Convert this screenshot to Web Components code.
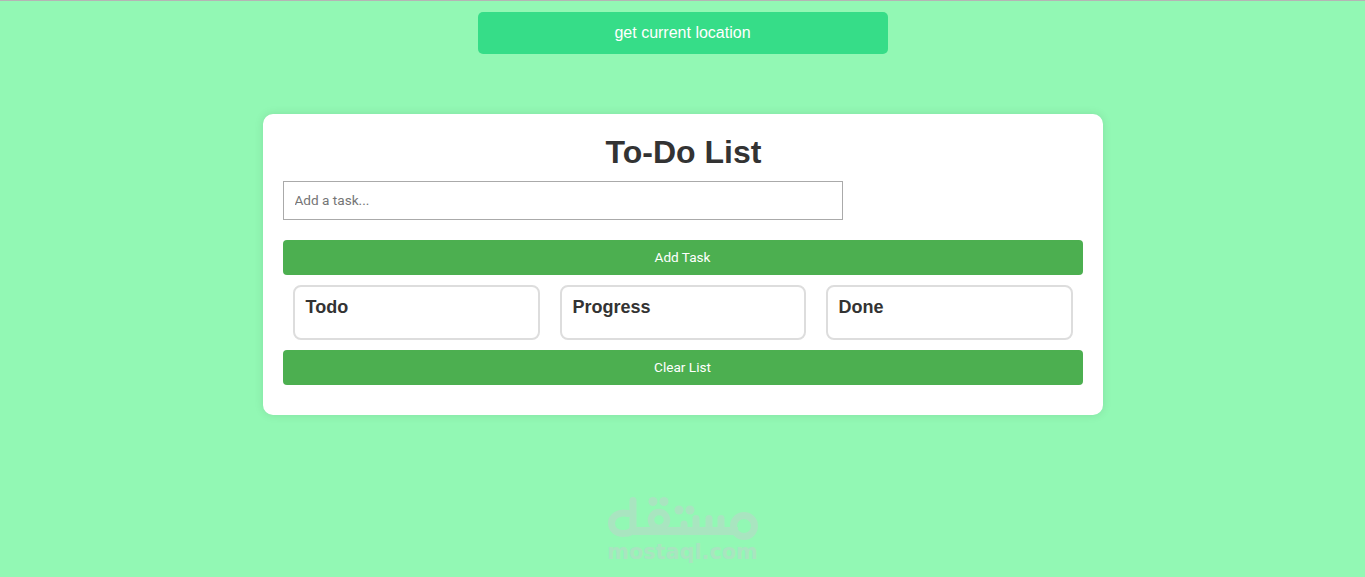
<!DOCTYPE html>
<html>
<head>
<meta charset="utf-8">
<title>To-Do List</title>
<style>
  html, body { margin: 0; height: 100%; }
  body {
    background: #92f8b4;
    border-top: 1px solid #b5b5b5;
    box-sizing: border-box;
    overflow: hidden;
    font-family: "Liberation Sans", Arial, sans-serif;
  }
</style>
</head>
<body>
<todo-app>
  <location-button slot="top">get current location</location-button>
  <task-column>Todo</task-column>
  <task-column>Progress</task-column>
  <task-column>Done</task-column>
</todo-app>
<mostaql-mark></mostaql-mark>

<script>
class LocationButton extends HTMLElement {
  constructor() {
    super();
    this.attachShadow({ mode: "open" });
    this.shadowRoot.innerHTML = `
      <style>
        :host { display: flex; justify-content: center; padding-top: 11px; }
        button {
          width: 410px; height: 42px; border: 0; border-radius: 5px;
          background: #36dd88; color: #fff;
          font: 16px "Liberation Sans", Arial, sans-serif;
        }
      </style>
      <button><slot></slot></button>
    `;
  }
}

class TaskColumn extends HTMLElement {
  constructor() {
    super();
    this.attachShadow({ mode: "open" });
    this.shadowRoot.innerHTML = `
      <style>
        :host {
          display: block; box-sizing: border-box; height: 55px;
          border: 2px solid #ddd; border-radius: 8px;
          padding: 10px 11px;
          font: bold 18px/21px "Liberation Sans", Arial, sans-serif;
          color: #333;
        }
      </style>
      <slot></slot>
    `;
  }
}

class TodoApp extends HTMLElement {
  constructor() {
    super();
    this.attachShadow({ mode: "open" });
    this.shadowRoot.innerHTML = `
      <style>
        :host { display: block; }
        .card {
          box-sizing: border-box; width: 840px; height: 301px; margin: 60px auto 0;
          padding: 20px; background: #fff; border-radius: 10px;
          box-shadow: 0 0 10px rgba(0,0,0,.1);
        }
        h1 {
          margin: 0 0 10px; padding-left: 2px; text-align: center; color: #333;
          font: bold 32px/37px "Liberation Sans", Arial, sans-serif;
        }
        input {
          display: block; box-sizing: border-box; width: 560px; height: 39px;
          margin: 0 0 20px; padding: 0 11px 2px; border: 1px solid #aaa;
          font: 13.6px Roboto, sans-serif; outline: 0;
        }
        input::placeholder { color: #757575; }
        .go {
          display: block; width: 100%; height: 35px; border: 0; border-radius: 4px;
          padding: 0 0 2px; background: #4caf50; color: #fff;
          font: 13.6px Roboto, sans-serif;
        }
        .cols { display: grid; grid-template-columns: 247fr 246fr 247fr; gap: 20px; margin: 10px; }
      </style>
      <slot name="top"></slot>
      <div class="card">
        <h1>To-Do List</h1>
        <input placeholder="Add a task...">
        <button class="go">Add Task</button>
        <div class="cols"><slot></slot></div>
        <button class="go">Clear List</button>
      </div>
    `;
  }
}

class MostaqlMark extends HTMLElement {
  constructor() {
    super();
    this.attachShadow({ mode: "open" });
    this.shadowRoot.innerHTML = `
      <style>
        :host {
          display: flex; flex-direction: column; align-items: center;
          margin-top: 82px; color: #a9e5c0;
        }
        svg { display: block; width: 150px; height: 44px; }
        span { font: bold 20.8px/22px "DejaVu Sans", sans-serif; }
      </style>
      <svg viewBox="0 0 150 44" fill="none" stroke="currentColor" stroke-width="7" stroke-linecap="round" stroke-linejoin="round">
        <path d="M20 16.5C10 14 3.5 20 3.5 26C3.5 33 9 36.5 15 36.5C21 36.5 25 35 25 30V3.5"/>
        <path d="M25 34H130" stroke-width="8" stroke-linecap="butt"/>
        <circle cx="51" cy="23" r="8" stroke-width="6.5"/>
        <path d="M76 34V27M88 34V21.5M101 34V21.5M113 34V21.5"/>
        <circle cx="136" cy="29" r="10.5"/>
        <g fill="currentColor" stroke="none">
          <circle cx="45" cy="4.5" r="4.5"/><circle cx="56" cy="4.5" r="4.5"/>
          <circle cx="71" cy="13" r="4.5"/><circle cx="82" cy="13" r="4.5"/>
        </g>
      </svg>
      <span>mostaql.com</span>
    `;
  }
}

customElements.define('location-button', LocationButton);
customElements.define('task-column', TaskColumn);
customElements.define('todo-app', TodoApp);
customElements.define('mostaql-mark', MostaqlMark);
</script>
</body>
</html>
